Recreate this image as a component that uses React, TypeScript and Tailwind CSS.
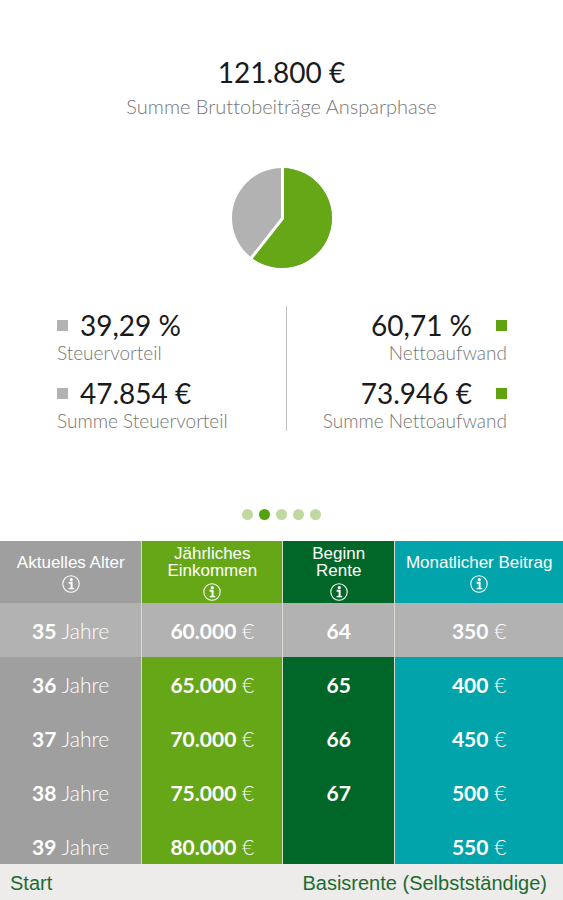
import type { ReactNode } from "react";

const columns = [
  { label: "Aktuelles Alter", width: "w-[25.3%]", bg: "bg-[#9f9f9f]", unit: "Jahre" },
  { label: "Jährliches Einkommen", width: "w-[25%]", bg: "bg-[#66a718]", unit: "€" },
  { label: "Beginn Rente", width: "w-[19.9%]", bg: "bg-[#006729]", unit: "" },
  { label: "Monatlicher Beitrag", width: "w-[29.8%]", bg: "bg-[#00a4aa]", unit: "€" },
];

const rows = [
  ["35", "60.000", "64", "350"],
  ["36", "65.000", "65", "400"],
  ["37", "70.000", "66", "450"],
  ["38", "75.000", "67", "500"],
  ["39", "80.000", "", "550"],
];

const selectedRow = 0;

function InfoIcon() {
  return (
    <svg viewBox="0 0 18 18" className="size-[18px]" fill="none" stroke="currentColor" aria-hidden="true">
      <circle cx="9" cy="9" r="8.2" strokeWidth="1.1" />
      <circle cx="9.3" cy="4.6" r="1.6" fill="currentColor" stroke="none" />
      <path d="M6.6 7.8h3v5.4" strokeWidth="2" />
      <path d="M6.6 13.6h5.6" strokeWidth="1.4" />
    </svg>
  );
}

function Pie() {
  return (
    <svg viewBox="0 0 100 100" className="size-[100px]" role="img" aria-label="39,29 % Steuervorteil, 60,71 % Nettoaufwand">
      <circle cx="50" cy="50" r="50" fill="#b2b2b2" />
      <path d="M50 50V0A50 50 0 1 1 18.8 89.1Z" fill="#66a718" />
      <path d="M50.5 -1V50.5L18.500 91" fill="none" stroke="#fff" strokeWidth="3" />
    </svg>
  );
}

function Stat({ value, label, right = false }: { value: string; label: string; right?: boolean }) {
  return (
    <div className={right ? "text-right" : "text-left"}>
      <dd className={`flex items-center text-[28px] leading-8 ${right ? "flex-row-reverse gap-6" : "gap-3"}`}>
        <span className={`size-[11px] ${right ? "bg-[#5fa40f]" : "bg-[#b2b2b2]"}`} />
        <span>{value}</span>
      </dd>
      <dt className="text-[19px] leading-6 font-light text-[#757575]">{label}</dt>
    </div>
  );
}

function StatGroup({ children }: { children: ReactNode }) {
  return <dl className="flex flex-1 flex-col gap-3 pt-[3px]">{children}</dl>;
}

export default function App() {
  return (
    <div className="flex min-h-screen flex-col bg-white font-['Lato','Liberation_Sans',sans-serif] text-[#1a1a1a] [font-variant-ligatures:none]">
      <main className="flex flex-1 flex-col items-center pt-14">
        <h1 className="text-[28px] leading-8">121.800 €</h1>
        <p className="mt-1 text-[20px] leading-7 font-light text-[#757575]">Summe Bruttobeiträge Ansparphase</p>
        <div className="mt-12">
          <Pie />
        </div>
        <section className="mt-[38px] flex w-full pr-14 pl-[57px]">
          <StatGroup>
            <Stat value="39,29 %" label="Steuervorteil" />
            <Stat value="47.854 €" label="Summe Steuervorteil" />
          </StatGroup>
          <div className="ml-2 h-[125px] w-px bg-[#c0c0c0]" />
          <StatGroup>
            <Stat value="60,71 %" label="Nettoaufwand" right />
            <Stat value="73.946 €" label="Summe Nettoaufwand" right />
          </StatGroup>
        </section>
        <nav className="mt-auto mb-[21px] flex gap-1.5" aria-label="Seiten">
          {[1, 2, 3, 4, 5].map((page) => (
            <button
              key={page}
              type="button"
              aria-label={`Seite ${page}`}
              className={`size-[11px] rounded-full ${page === 2 ? "bg-[#55a30c]" : "bg-[#bfd9a0]"}`}
            />
          ))}
        </nav>
      </main>

      <div className="h-[323px] overflow-hidden">
        <table className="w-full table-fixed border-separate border-spacing-0 text-white">
          <thead>
            <tr className="h-[62px]">
              {columns.map((c) => (
                <th
                  key={c.label}
                  scope="col"
                  className={`border-r border-[#d5dccb] p-0 pt-0.5 align-middle font-['Liberation_Sans',sans-serif] text-[17px] leading-[17px] font-normal last:border-r-0 ${c.width} ${c.bg}`}
                >
                  <div className="flex flex-col items-center gap-1">
                    <span className={c.label === "Monatlicher Beitrag" ? "" : "px-5"}>
                      {c.label === "Aktuelles Alter" ? <span className="whitespace-nowrap">{c.label}</span> : c.label}
                    </span>
                    <button type="button" aria-label={`Info: ${c.label}`}>
                      <InfoIcon />
                    </button>
                  </div>
                </th>
              ))}
            </tr>
          </thead>
          <tbody className="text-[21px] leading-8">
            {rows.map((row, r) => (
              <tr key={row[0]} className="h-[54px]">
                {row.map((value, i) => (
                  <td
                    key={columns[i].label}
                    className={`border-r border-[#d5dccb] p-0 pt-0.5 text-center align-middle last:border-r-0 ${r === selectedRow ? "bg-[#b2b2b2]" : columns[i].bg}`}
                  >
                    <span className="font-bold">{value}</span>
                    {columns[i].unit && <span className="font-light"> {columns[i].unit}</span>}
                  </td>
                ))}
              </tr>
            ))}
          </tbody>
        </table>
      </div>

      <footer className="flex h-9 items-center justify-between bg-[#edecea] pt-0.5 pr-4 pl-2.5 font-['Liberation_Sans',sans-serif] text-[20px] text-[#1d6b33]">
        <a href="#start">Start</a>
        <span>Basisrente (Selbstständige)</span>
      </footer>
    </div>
  );
}
